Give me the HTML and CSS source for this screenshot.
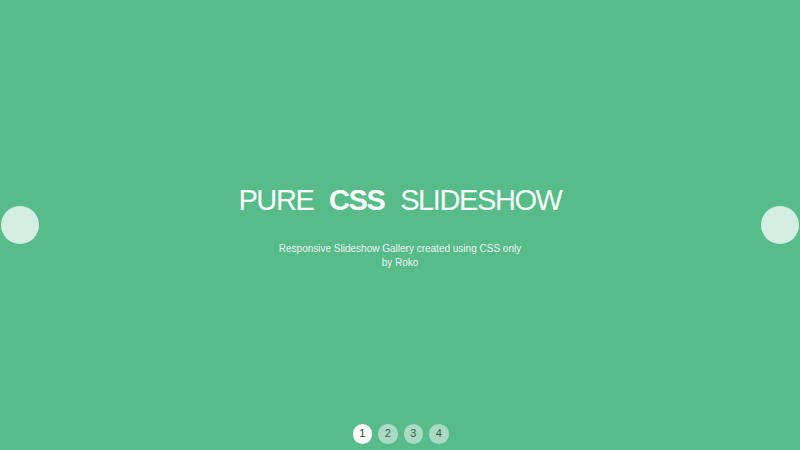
FILE: index.html
```
<!DOCTYPE html>
<html>
<head>
<meta charset="utf-8">
<link rel="stylesheet" href="styles.css">
</head>
<body>
<div class="slideshow">
  <div class="slide">
    <h1 class="title">PURE <b>CSS</b> SLIDESHOW</h1>
    <p class="sub">Responsive Slideshow Gallery created using CSS only<br>by Roko</p>
  </div>
  <span class="arrow prev"></span>
  <span class="arrow next"></span>
  <div class="dots">
    <span class="dot active">1</span>
    <span class="dot">2</span>
    <span class="dot">3</span>
    <span class="dot">4</span>
  </div>
</div>
</body>
</html>
```
FILE: styles.css
```
html, body { margin: 0; padding: 0; }
body { background: #57bc8a; font-family: "Liberation Sans", Arial, sans-serif; color: #fff; }
.slideshow { position: relative; width: 800px; height: 450px; overflow: hidden; }
.slide { height: 450px; display: flex; flex-direction: column; align-items: center; justify-content: flex-start; padding-top: 180px; box-sizing: border-box; }
.title { margin: 0; font-size: 29px; font-weight: normal; line-height: 40px; letter-spacing: -1.4px; word-spacing: 9px; }
.title b { font-weight: bold; }
.sub { margin: 22px 0 0; font-size: 10px; line-height: 14px; text-align: center; color: rgba(255,255,255,0.92); }
.arrow { position: absolute; top: 206px; width: 38px; height: 38px; border-radius: 50%; background: #d3efe1; }
.prev { left: 1px; }
.next { left: 761px; }
.dots { position: absolute; left: 0; right: 0; top: 424px; display: flex; justify-content: center; gap: 6px; padding-left: 1px; }
.dot { width: 19.5px; height: 19.5px; border-radius: 50%; background: #a9dbc2; color: #3d5a4b; font-size: 11px; line-height: 19.5px; text-align: center; }
.dot.active { background: #fff; color: #333; }
```
